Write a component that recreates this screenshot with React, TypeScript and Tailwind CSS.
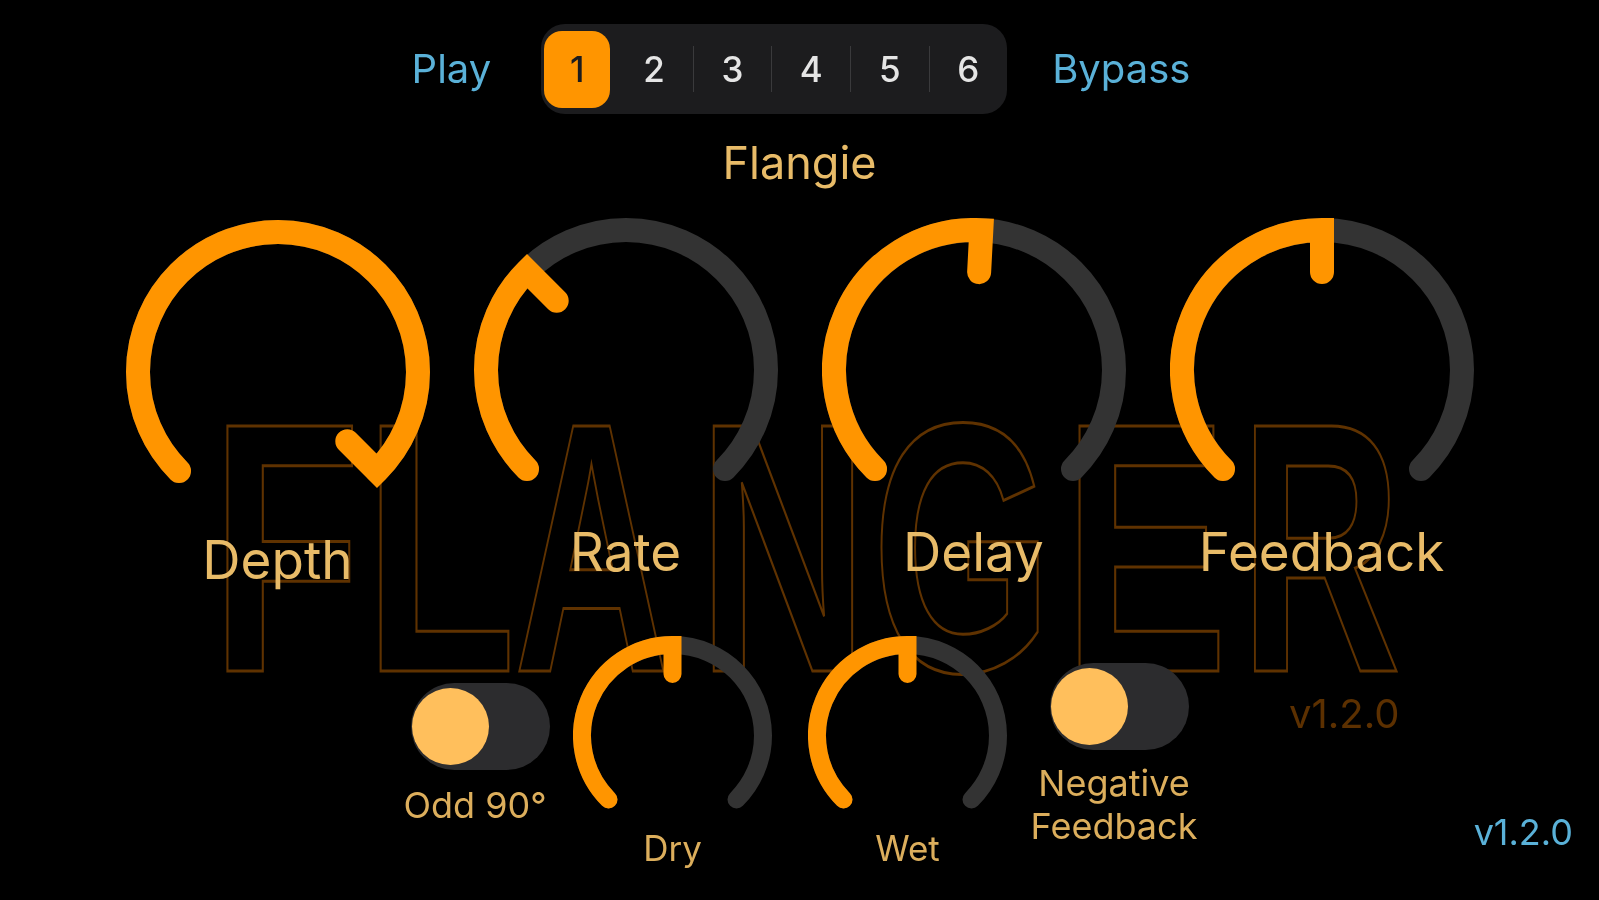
import { Fragment, useState } from 'react';

const FONT = { fontFamily: 'Inter, "Liberation Sans", sans-serif' };

// point on a knob ring, angle in degrees, 0 is straight up
function polar(c: number, r: number, deg: number) {
  const a = (deg * Math.PI) / 180;
  return { x: c + r * Math.sin(a), y: c - r * Math.cos(a) };
}

function Knob({ size, stroke, tick, angle }: { size: number; stroke: number; tick: number; angle: number }) {
  const c = size / 2;
  const r = c - stroke / 2;
  const start = polar(c, r, -135);
  const end = polar(c, r, 135);
  const pos = polar(c, r, angle);
  const inner = polar(c, r - tick, angle);
  const large = angle + 135 > 180 ? 1 : 0;

  return (
    <svg width={size} height={size} viewBox={`0 0 ${size} ${size}`} fill="none" className="block shrink-0">
      <path
        d={`M${start.x} ${start.y}A${r} ${r} 0 1 1 ${end.x} ${end.y}`}
        stroke="#333333"
        strokeWidth={stroke}
        strokeLinecap="round"
      />
      <path
        d={`M${start.x} ${start.y}A${r} ${r} 0 ${large} 1 ${pos.x} ${pos.y}L${inner.x} ${inner.y}`}
        stroke="#ff9500"
        strokeWidth={stroke}
        strokeLinecap="round"
        strokeLinejoin="miter"
      />
    </svg>
  );
}

function BigKnob({ label, angle, low }: { label: string; angle: number; low?: boolean }) {
  return (
    <div className="flex w-[304px] flex-col items-center">
      <Knob size={304} stroke={24} tick={42} angle={angle} />
      <span className={`${low ? 'mt-[7px]' : 'mt-[1px]'} text-[53px] leading-[58px] text-[#e8bb68]`}>{label}</span>
    </div>
  );
}

function SmallKnob({ label, angle }: { label: string; angle: number }) {
  return (
    <div className="flex w-[199px] flex-col items-center">
      <Knob size={199} stroke={18} tick={29} angle={angle} />
      <span className="mt-[-7px] text-[35px] leading-[40px] text-[#dcae5c]">{label}</span>
    </div>
  );
}

function Toggle({ lines, top, gap }: { lines: string[]; top: string; gap: string }) {
  const [on, setOn] = useState(false);
  return (
    <div className={`flex w-[170px] flex-col items-center ${top}`}>
      <button
        onClick={() => setOn(!on)}
        className={`ml-[10px] flex h-[87px] w-[139px] items-center rounded-full bg-[#2c2c2e] px-[1px] ${on ? 'justify-end' : 'justify-start'}`}
      >
        <span className="block h-[77px] w-[77px] rounded-full bg-[#ffbf5c]" />
      </button>
      <span className={`${gap} text-center text-[36px] leading-[43px] text-[#dcae5c]`}>
        {lines.map(l => (
          <span key={l} className="block whitespace-nowrap">{l}</span>
        ))}
      </span>
    </div>
  );
}

// outlined FLANGER wordmark, real text stretched to each letter's box
const LETTERS = [
  { ch: 'F', x: 211, w: 150 },
  { ch: 'L', x: 364, w: 152 },
  { ch: 'A', x: 514, w: 155 },
  { ch: 'N', x: 698, w: 170 },
  { ch: 'G', x: 872, w: 180 },
  { ch: 'E', x: 1063, w: 165 },
  { ch: 'R', x: 1240, w: 161 },
];

function Wordmark() {
  return (
    <svg width={1599} height={900} className="pointer-events-none absolute inset-0">
      {LETTERS.map(l => (
        <text
          key={l.ch}
          x={l.x}
          y={671}
          textLength={l.w}
          lengthAdjust="spacingAndGlyphs"
          fontFamily='"Liberation Sans", sans-serif'
          fontWeight={700}
          fontSize={356}
          fill="none"
          stroke="#5f3200"
          strokeWidth={3}
        >
          {l.ch}
        </text>
      ))}
    </svg>
  );
}

export default function App() {
  const [preset, setPreset] = useState(1);

  return (
    <main style={FONT} className="relative flex h-screen w-full flex-col items-center overflow-hidden bg-black blur-[0.7px]">
      <Wordmark />

      {/* Top bar */}
      <div className="relative ml-[3px] mt-[24px] flex h-[90px] items-center gap-[50px]">
        <span className="text-[40px] text-[#5ab1d8]">Play</span>
        <div className="flex h-[90px] w-[466px] items-center rounded-[24px] bg-[#1c1c1e] pl-[3px]">
          {[1, 2, 3, 4, 5, 6].map(n => (
            <Fragment key={n}>
              {n > 2 && <span className="h-[46px] w-px shrink-0 bg-[#3a3a3c]" />}
              <button
                onClick={() => setPreset(n)}
                className={`flex h-[77px] shrink-0 items-center justify-center text-[35px] font-medium ${
                  preset === n
                    ? 'mr-[5px] w-[66px] rounded-[18px] bg-[#ff9500] text-[#1c1c1e]'
                    : 'w-[77.6px] text-[#e5e5e5]'
                }`}
              >
                {n}
              </button>
            </Fragment>
          ))}
        </div>
        <span className="-ml-[5px] text-[40px] text-[#5ab1d8]">Bypass</span>
      </div>

      <div className="relative mt-[20px] text-[45px] leading-[58px] text-[#e8bb68]">Flangie</div>

      {/* Main knobs */}
      <div className="relative mt-[26px] flex h-[418px] gap-[44px]">
        <div className="pt-[2px]">
          <BigKnob label="Depth" angle={135} low />
        </div>
        <BigKnob label="Rate" angle={-45} />
        <BigKnob label="Delay" angle={3} />
        <BigKnob label="Feedback" angle={0} />
      </div>

      {/* Lower row */}
      <div className="relative flex w-full items-start pl-[390px]">
        <Toggle lines={['Odd 90°']} top="mt-[47px]" gap="mt-[14px]" />
        <div className="ml-[13px]">
          <SmallKnob label="Dry" angle={0} />
        </div>
        <div className="ml-[36px]">
          <SmallKnob label="Wet" angle={0} />
        </div>
        <div className="ml-[22px]">
          <Toggle lines={['Negative', 'Feedback']} top="mt-[27px]" gap="mt-[12px]" />
        </div>
      </div>

      <span className="absolute left-[1289px] top-[684px] text-[40px] text-[#5c3000]">v1.2.0</span>
      <span className="absolute right-[26px] top-[805px] text-[36px] text-[#5ab1d8]">v1.2.0</span>
    </main>
  );
}
